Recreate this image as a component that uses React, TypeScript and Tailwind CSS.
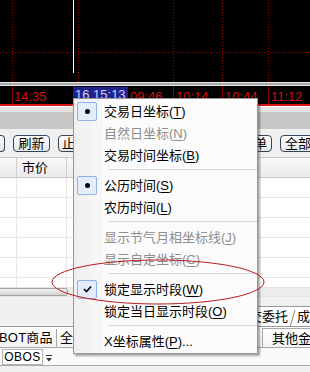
import React from "react";

type Item =
  | { sep: true }
  | { sep?: false; label: string; key: string; mark?: "dot" | "check"; disabled?: boolean; suffix?: string };

const menu: Item[] = [
  { label: "交易日坐标", key: "T", mark: "dot" },
  { label: "自然日坐标", key: "N", disabled: true },
  { label: "交易时间坐标", key: "B" },
  { sep: true },
  { label: "公历时间", key: "S", mark: "dot" },
  { label: "农历时间", key: "L" },
  { sep: true },
  { label: "显示节气月相坐标线", key: "J", disabled: true },
  { label: "显示自定坐标", key: "C", disabled: true },
  { sep: true },
  { label: "锁定显示时段", key: "W", mark: "check" },
  { label: "锁定当日显示时段", key: "O" },
  { sep: true },
  { label: "X坐标属性", key: "P", suffix: "..." },
];

function ChartArea() {
  const dotted = [12.5, 78.5, 173.5, 222.5, 268.5];
  return (
    <svg width="310" height="82" className="block bg-black">
      {dotted.map((x) => (
        <line key={x} x1={x} y1={0} x2={x} y2={82} stroke="#b00000" strokeDasharray="1 2" />
      ))}
      <line x1={0} y1={52.5} x2={310} y2={52.5} stroke="#b00000" strokeDasharray="1 2" />
      <line x1={73.5} y1={0} x2={73.5} y2={73} stroke="#ffffff" />
    </svg>
  );
}

function TimeAxis() {
  const cells = [
    { w: "w-[46px]", t: "09:46" },
    { w: "w-[49px]", t: "10:14" },
    { w: "w-[46px]", t: "10:44" },
    { w: "flex-1", t: "11:12" },
  ];
  return (
    <div className="flex h-[18px] bg-black text-[13px] leading-none text-[#d01010]">
      <div className="w-[12px]" />
      <div className="w-[61px] border-l border-[#8a0000] pl-[1px] pt-[4px]">14:35</div>
      <div className="w-[54px] border-l border-[#8a0000] pt-[1px]">
        <span className="inline-block bg-[#22228c] px-[1px] pt-[1px] pb-[3px] text-[#c8d0ff]">16 15:13</span>
      </div>
      {cells.map((c) => (
        <div key={c.t} className={`${c.w} border-l border-[#8a0000] pl-[2px] pt-[4px]`}>
          {c.t}
        </div>
      ))}
    </div>
  );
}

function Btn({ children, className = "" }: { children?: React.ReactNode; className?: string }) {
  return (
    <div
      className={`flex h-[17px] items-center justify-center rounded-[4px] border border-[#34475a] bg-gradient-to-b from-white to-[#e6e6e6] text-[13px] leading-none text-black ${className}`}
    >
      {children}
    </div>
  );
}

function MenuMark({ mark }: { mark: "dot" | "check" }) {
  return (
    <div className="ml-[3px] flex h-[19px] w-[20px] items-center justify-center rounded-[2px] border border-[#8db2e3] bg-[#e2eefb]">
      {mark === "dot" ? (
        <div className="h-[5px] w-[5px] rounded-full bg-black" />
      ) : (
        <svg width="9" height="8" viewBox="0 0 9 8">
          <path d="M1 4 L3.5 6.5 L8 1.5" fill="none" stroke="#000" strokeWidth="1.6" />
        </svg>
      )}
    </div>
  );
}

function ContextMenu() {
  return (
    <div className="absolute left-[73px] top-[98px] w-[185px] border border-[#979797] bg-[#fbfbfb] py-[1px] shadow-[2px_2px_2px_rgba(0,0,0,0.35)]">
      <div className="absolute bottom-0 left-0 top-0 w-[28px] border-r border-[#f4f4f4] bg-gradient-to-r from-[#efefef] to-[#f8f8f8]" />
      <div className="relative">
        {menu.map((it, i) =>
          it.sep ? (
            <div key={i} className="flex h-[8px] items-center pl-[34px]">
              <div className="h-[2px] w-full border-t border-[#d9d9d9] border-b-white" />
            </div>
          ) : (
            <div key={i} className="flex h-[22px] items-center">
              <div className="w-[30px]">{it.mark && <MenuMark mark={it.mark} />}</div>
              <span className={`text-[13px] leading-none ${it.disabled ? "text-[#8e8e8e]" : "text-black"}`}>
                {it.label}(<span className="underline underline-offset-2">{it.key}</span>){it.suffix}
              </span>
            </div>
          )
        )}
      </div>
    </div>
  );
}

function TableRow() {
  return (
    <div className="flex h-[20px] border-b border-[#e6e6e6] bg-white">
      <div className="w-[17px] border-r border-[#e6e6e6]" />
      <div className="w-[50px] border-r border-[#e6e6e6]" />
      <div className="flex-1" />
    </div>
  );
}

export default function App() {
  return (
    <div className="relative h-[372px] w-[310px] overflow-hidden bg-[#f0f0f0] font-['Liberation_Sans','Noto_Sans_CJK_SC',sans-serif]">
      <ChartArea />
      <div className="h-[4px] border-y border-[#e8e8e8] bg-[#a8a8a8]" />
      <TimeAxis />
      <div className="h-[2px] bg-[#d81818]" />
      <div className="h-[6px] border-t border-white bg-[#e2e2e2]" />
      <div className="h-[17px] bg-[#c8c8c8]" />

      {/* toolbar */}
      <div className="flex h-[28px] items-start pt-[6px]">
        <Btn className="w-[5px] rounded-l-none border-l-0" />
        <Btn className="ml-[8px] w-[37px]">刷新</Btn>
        <Btn className="ml-[8px] w-[50px] justify-start pl-[3px]">止</Btn>
        <div className="flex-1" />
        <Btn className="w-[60px] justify-end pr-[4px]">单</Btn>
        <Btn className="ml-[8px] mr-[-30px] w-[60px] justify-start pl-[4px]">全部</Btn>
      </div>

      {/* table */}
      <div className="flex h-[21px] border-y border-[#c8c8c8] bg-gradient-to-b from-[#f7f7f7] to-[#ebebeb] text-[13px] leading-none">
        <div className="w-[17px] border-r border-[#cfcfcf]" />
        <div className="flex w-[50px] items-center border-r border-[#cfcfcf] pl-[5px]">市价</div>
        <div className="flex-1" />
      </div>
      <div className="h-[109px] overflow-hidden bg-white">
        {[0, 1, 2, 3, 4, 5].map((r) => (
          <TableRow key={r} />
        ))}
      </div>

      {/* scrollbar */}
      <div className="flex h-[10px] items-center border-y border-[#e4e4e4] bg-[#ececec]">
        <div className="h-[8px] w-[68px] rounded-r-[3px] border border-l-0 border-[#a4a4a4] bg-gradient-to-b from-[#f2f2f2] to-[#d2d2d2]" />
      </div>

      {/* tab strip */}
      <div className="mt-[9px] flex h-[21px] items-end border-b border-[#9a9a9a]">
        <div className="ml-[244px] flex h-[20px] flex-1 items-center border-l border-t border-[#9a9a9a] bg-white pl-[4px] text-[13px] leading-none whitespace-nowrap">
          <span>交委托</span>
          <svg width="9" height="20" viewBox="0 0 9 20" className="shrink-0">
            <path d="M2 20 L7 3" stroke="#8a8a8a" fill="none" />
          </svg>
          <span>成</span>
        </div>
      </div>

      <div className="flex h-[21px] items-center border-b border-[#a8a8a8] bg-gradient-to-b from-white to-[#f4f4f4] pt-[1px] text-[13px] leading-none">
        <span className="ml-[-1px] w-[57px] tracking-[0.2px]">BOT商品</span>
        <div className="h-[18px] border-l border-[#a8a8a8]" />
        <span className="ml-[3px]">全部</span>
        <div className="flex-1" />
        <div className="flex h-[19px] w-[48px] items-center self-end border-l border-t border-[#a8a8a8] pl-[9px] whitespace-nowrap">
          其他金
        </div>
      </div>

      <div className="flex h-[18px] items-center border-b border-[#a8a8a8] bg-[#fafafa]">
        <div className="ml-[2px] flex h-[16px] w-[41px] items-center justify-center border border-[#b4b4b4] bg-white text-[12px] leading-none tracking-[0.5px]">
          OBOS
        </div>
        <svg width="8" height="9" viewBox="0 0 8 9" className="ml-[2px] mt-[3px]">
          <line x1="1" y1="1.5" x2="7" y2="1.5" stroke="#333" />
          <path d="M1 4 L7 4 L4 7.5 Z" fill="#333" />
        </svg>
      </div>

      <ContextMenu />

      <svg width="310" height="372" className="pointer-events-none absolute left-0 top-0">
        <ellipse cx="158" cy="282" rx="106" ry="22" fill="none" stroke="#b81c1c" strokeWidth="1" />
      </svg>
    </div>
  );
}
